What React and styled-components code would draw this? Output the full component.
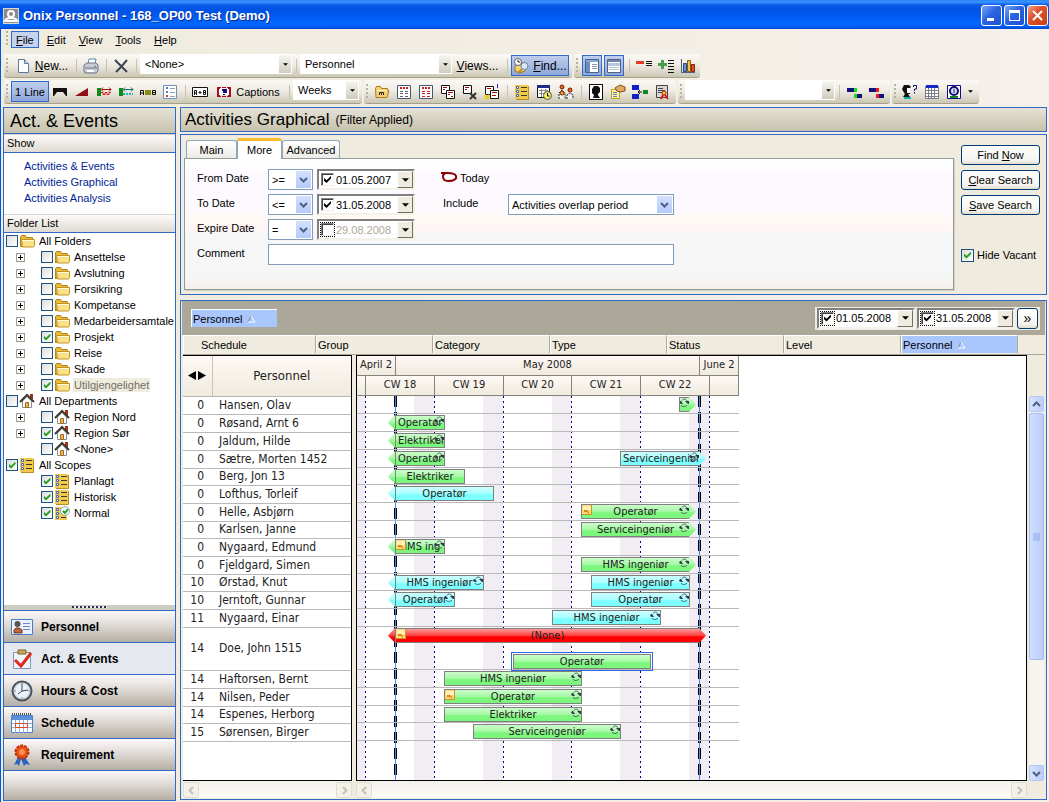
import React from "react";
import styled, { createGlobalStyle, css } from "styled-components";

const BLUE = "#316ac5";
const BEIGE = "#efebde";
const UI = '"Liberation Sans", Arial, sans-serif';
const CHART = '"DejaVu Sans Condensed", "DejaVu Sans", Tahoma, sans-serif';

const Global = createGlobalStyle`
  * { box-sizing: border-box; }
  body { margin: 0; font: 11px/14px ${UI}; color: #000; background: ${BEIGE}; }
  button, input, select { font: inherit; color: inherit; margin: 0; padding: 0; border-radius: 0; }
  button { border: 0; background: none; white-space: nowrap; }
  ul { list-style: none; margin: 0; padding: 0; }
  h1, h2 { margin: 0; font-weight: normal; }
  svg { display: block; flex: none; }
  u { text-underline-offset: 1px; }
`;

/* ---------- window frame ---------- */
const Window = styled.div`
  min-height: 100vh;
  display: flex;
  flex-direction: column;
  border-left: 1px solid #0054e3;
  background: linear-gradient(90deg, #efebde, #f5f0ea);
`;
const TitleBar = styled.header`
  height: 29px;
  margin-left: -1px;
  flex: none;
  display: flex;
  align-items: center;
  gap: 4px;
  padding: 3px 1px 1px 3px;
  color: #fff;
  text-shadow: 1px 1px #0a2a8a;
  background: linear-gradient(#2b87fa 0, #3a94ff 2px, #0a5be8 5px, #0052e4 10px, #0059f0 16px, #0066ff 22px, #0064fb 26px, #0043cf 29px);
`;
const Title = styled.h1`
  flex: 1;
  font-size: 13px;
  font-weight: bold;
`;
const WinButtons = styled.div`
  display: flex;
  gap: 2px;
`;
const WinButton = styled.button`
  width: 21px;
  height: 21px;
  border: 1px solid #fff;
  border-radius: 3px;
  display: grid;
  place-items: center;
  background: ${(p) =>
    p.$close
      ? "linear-gradient(135deg, #f0a088, #e0532c 40%, #c83c14)"
      : "linear-gradient(135deg, #7da7f5, #2b64e0 45%, #1c50d0)"};
`;

/* ---------- menus and toolbars ---------- */
const MenuBar = styled.nav`
  height: 25px;
  display: flex;
  align-items: flex-start;
  padding: 2px 0 0 5px;
`;
const MenuItem = styled.button`
  height: 17px;
  padding: 0 4px;
  margin-right: 3px;
  border: 1px solid ${(p) => (p.$active ? BLUE : "transparent")};
  background: ${(p) => (p.$active ? "#c6d3ef" : "none")};
`;
const ToolRow = styled.div`
  height: 26px;
  display: flex;
  align-items: flex-start;
  gap: 2px;
  padding-left: 3px;
`;
const Tools = styled.div`
  height: 24px;
  display: flex;
  align-items: center;
  padding: 0 ${(p) => p.$end || 3}px 0 2px;
  border-radius: 3px;
  background: linear-gradient(#fbf9f6, #f0ece4 45%, #cbc7b4);
  border-bottom: 1px solid #a5a287;
`;
const Grip = styled.span`
  width: 5px;
  height: 15px;
  flex: none;
  background: radial-gradient(circle at 1px 1px, #b5b29f 1px, transparent 1px) 0 0 / 5px 4px;
`;
const Sep = styled.span`
  width: 8px;
  height: 14px;
  flex: none;
  background: linear-gradient(#c5c2b5, #c5c2b5) center / 1px 100% no-repeat;
`;
const ToolButton = styled.button`
  width: ${(p) => p.$w || 22}px;
  height: 21px;
  flex: none;
  display: flex;
  align-items: center;
  justify-content: center;
  gap: 4px;
  margin: 0 ${(p) => (p.$spaced ? 1 : 0)}px;
  font-size: ${(p) => (p.$big ? 12 : 11)}px;
  border: 1px solid ${(p) => (p.$on ? BLUE : "transparent")};
  background: ${(p) => (p.$on ? "linear-gradient(#c0ceec, #8ea6da)" : "none")};
`;
const ComboBox = styled.span`
  display: grid;
  width: ${(p) => p.$w}px;
  height: 20px;
  align-self: flex-start;
  background: #fff;
  border: 1px solid #fff;
  & > * { grid-area: 1 / 1; }
  select {
    appearance: none;
    border: 0;
    background: transparent;
    padding: 0 16px 0 4px;
    outline: 0;
    min-width: 0;
  }
`;
const ComboArrow = styled.span`
  justify-self: end;
  pointer-events: none;
  width: 12px;
  display: grid;
  place-items: center;
  background: linear-gradient(#f8f6f2, #cfccbd);
`;
const Down = ({ w = 5 }) => (
  <svg width={w} height={(w + 1) / 2} viewBox="0 0 6 3" aria-hidden="true"><path d="M0 0h6L3 3z" fill="#000" /></svg>
);
const Combo = ({ w, value, label }) => (
  <ComboBox $w={w}>
    <select aria-label={label} defaultValue={value}><option>{value}</option></select>
    <ComboArrow><Down /></ComboArrow>
  </ComboBox>
);

/* ---------- icons ---------- */
const paint = {
  doc: <><path d="M3.500 1.500h6l4 4v9h-10z" fill="#fff" stroke="#5a7aa8" /><path d="M9.500 1.500v4h4" fill="#c8d8f0" stroke="#5a7aa8" /></>,
  printer: <><path d="M5 6l1-5h7l-1 5z" fill="#fff" stroke="#5b86b8" /><path d="M1 7l3-2h9l2 2v6l-2 2H2l-1-2z" fill="#c9ccd8" stroke="#6c7488" /><path d="M2 10h12" stroke="#6c7488" /><path d="M4 12h7v2H4z" fill="#fff" /><path d="M11 8h2v1h-2z" fill="#2fb52f" /></>,
  cross: <path d="M2 2L14 14M14 2L8 9L3 14" stroke="#3c4454" strokeWidth="2" fill="none" />,
  find: <><path d="M2 8l5-3h6l-1 8-6 2-4-2z" fill="#f6d36b" stroke="#9a7420" /><circle cx="5" cy="4" r="3.500" fill="#fff" stroke="#5a6474" /><path d="M5 2v2h2" stroke="#222" fill="none" /><circle cx="11.500" cy="8" r="3.500" fill="#d6e8fa" stroke="#6c86a8" /><path d="M9 11l-4 4" stroke="#c08a30" strokeWidth="2" /></>,
  paneLeft: <><path d="M1.500 1.500h13v13h-13z" fill="#fff" stroke="#44608e" /><path d="M2 2h12v2H2z" fill="#8aa6d6" /><path d="M2 4h4v10H2z" fill="#6d8cc4" /><path d="M8 6.500h5M8 8.500h5M8 10.500h5" stroke="#8d9aae" /></>,
  paneTop: <><path d="M1.500 1.500h13v13h-13z" fill="#fff" stroke="#53617a" /><path d="M2 2h12v2H2z" fill="#6f87b0" /><path d="M2 5h12v3H2z" fill="#b8c8e0" /><path d="M3 9.500h10M3 11.500h10" stroke="#b8bfca" /></>,
  minus: <><path d="M0 3h8v3H0z" fill="#e03c1c" /><path d="M10 3.500h6M10 5.500h6M10 7.500h6" stroke="#111" /></>,
  plus: <><path d="M3 2h3v3h3v3H6v3H3V8H0V5h3z" fill="#4c9c50" /><path d="M10 2.500h6M10 5.500h6M10 8.500h6M10 11.500h6M10 14.500h6" stroke="#111" /></>,
  chart: <><path d="M1.500 1v13.500H15" stroke="#50607c" fill="none" /><path d="M3.500 5.500h3v8h-3z" fill="#5b96dc" stroke="#234c88" /><path d="M7.500 2.500h3v11h-3z" fill="#f6c040" stroke="#8a5a10" /><path d="M11.500 6.500h3v7h-3z" fill="#e0502c" stroke="#802010" /></>,
  arch: <path d="M1 4h14v8h-1L11 8H5l-3 4H1z" fill="#111" />,
  ramp: <path d="M1 12L14 4v8z" fill="#8e0f16" />,
  redSpan: <><path d="M1 4h4v8H1z" fill="#10881c" /><path d="M5 8.500h2v2h2v-2h2v2h2v-2h2" stroke="#e01818" fill="none" /><path d="M6 5.500h9M7 3.500l-2 2 2 2M13 3.500l2 2-2 2" stroke="#a01010" fill="none" /></>,
  cyanSpan: <><path d="M1 4h4v8H1z" fill="#10881c" /><path d="M5 10h10" stroke="#20b8b8" strokeWidth="2" strokeDasharray="2 1" /><path d="M6 5.500h9M7 3.500l-2 2 2 2M13 3.500l2 2-2 2" stroke="#126c6c" fill="none" /></>,
  aBar: <><path d="M5 6h6v5H5z" fill="#8c8c10" /><path d="M.5 11V6.500h3V11M1 9h2M12.500 6.500v4h3v-4zM13 8.500h2" stroke="#111" fill="none" /></>,
  list: <><path d="M1.500 1.500h13v13h-13z" fill="#fff" stroke="#7090c0" /><path d="M4 3h2v2H4zM4 7h2v2H4z" fill="#4a80d0" /><path d="M4 11h2v2H4z" fill="#d04020" /><path d="M8 4.500h5M8 8.500h5M8 12.500h5" stroke="#90a0b8" /></>,
  aPlusB: <><path d="M.5 3.500h15v9H.5z" fill="#fff" stroke="#111" /><path d="M2.500 11V6.500h2V11M2.500 9h2M6.500 8.500h3M8 7v3M11.500 6.500v4h2v-4zM11.500 8.500h2" stroke="#111" fill="none" /></>,
  query: <><path d="M1 3.500h14M1 12.500h14" stroke="#a01020" strokeWidth="1" strokeDasharray="4 1" /><path d="M1 4h3v8H1zM12 4h3v8h-3z" fill="#a01020" /><path d="M3 5h10v6H3z" fill="#fff" /><path d="M6 6h4v2H8v1" stroke="#10107c" strokeWidth="2" fill="none" /><path d="M7 10h2v1H7z" fill="#10107c" /></>,
  folder: <><path d="M1.500 4.500l1-2h4l1 2h6v2h1.500l-2 7h-11z" fill="#f6d070" stroke="#a87c1c" /><path d="M3 6.500h10" stroke="#fff3c0" /><path d="M5.500 11V8.500h2V11M7.500 8.500h2V11" stroke="#222" fill="none" /></>,
  pageRed: <><path d="M1.500 1.500h13v13h-13z" fill="#fff" stroke="#405878" /><path d="M4 4h8" stroke="#d02020" strokeWidth="2" strokeDasharray="2 1" /><path d="M4 7.500h3M9 7.500h3M4 9.500h3M9 9.500h3M4 12.500h3M9 12.500h3" stroke="#666" /></>,
  pageRed2: <><path d="M1.500 1.500h13v13h-13z" fill="#fff" stroke="#405878" /><path d="M4 4h8" stroke="#d02020" strokeWidth="2" strokeDasharray="2 1" /><path d="M4 7.500h3M9 7.500h3M4 9.500h3M9 9.500h3M4 12.500h3M9 12.500h3" stroke="#d02020" /></>,
  copy: <><path d="M1.500 1.500h8v8h-8z" fill="#fff" stroke="#111" /><path d="M3 3.500h4M3 5.500h2" stroke="#a01010" /><path d="M6.500 6.500h8v8h-8z" fill="#fff" stroke="#111" /><path d="M8 8.500h5M8 10.500h2M11 12.500h2" stroke="#a01010" /></>,
  copyX: <><path d="M1.500 1.500h8v8h-8z" fill="#fff" stroke="#111" /><path d="M3 3.500h4M3 5.500h2" stroke="#a01010" /><path d="M8 9l6 6M14 9l-6 6" stroke="#333" strokeWidth="2" /></>,
  copyNew: <><path d="M1.500 2.500h8v8h-8z" fill="#fff" stroke="#111" /><path d="M6.500 6.500h8v8h-8z" fill="#fff" stroke="#111" /><path d="M3 4.500h4M8 8.500h5M8 11.500h4" stroke="#a01010" /><path d="M13.500 0v4" stroke="#2020c0" /><path d="M1 11l4 4M5 11l-4 4" stroke="#e8d010" strokeWidth="2" /></>,
  scope: <><path d="M1 1h13v14H1z" fill="#f2c94c" /><path d="M14.500 2v13.500H2" stroke="#b98d1e" fill="none" /><path d="M2.500 2.500h2v2h-2zM2.500 6.500h2v2h-2zM2.500 10.500h2v2h-2z" fill="#fff" stroke="#3c68b4" /><path d="M7 3.500h6M7 7.500h6M7 11.500h6" stroke="#3a3a28" /></>,
  calClock: <><path d="M1.500 1.500h12v12h-12z" fill="#fff" stroke="#111" /><path d="M1 1h13v3H1z" fill="#1c2c88" /><path d="M3 6.500h9M3 9.500h9M5.500 5v8M9.500 5v8" stroke="#888" /><circle cx="11.500" cy="11.500" r="4" fill="#f4f060" stroke="#555" /><path d="M11.500 9v3h2" stroke="#111" fill="none" /></>,
  people: <><circle cx="4" cy="3" r="2" fill="#f06820" stroke="#701c08" /><circle cx="12" cy="6" r="2" fill="#f06820" stroke="#701c08" /><path d="M1 15V9l3-3 3 3v6M9 15v-4l3-2 3 2v4" fill="#eee" stroke="#222" strokeDasharray="2 1" /><circle cx="4" cy="9" r="2" fill="#f0b020" stroke="#701c08" /></>,
  head: <><path d="M1 0h14v16H1z" fill="#111" /><path d="M2 1h12v14H2z" fill="#fff" /><path d="M4 5l2-3h4l2 2v4l-2 2v1l2 3H5l1-3-2-2z" fill="#111" /></>,
  hand: <><path d="M1.500 5.500h8v9h-8z" fill="#fff4a0" stroke="#b8a020" /><path d="M3 8.500h4M3 10.500h4M3 12.500h4" stroke="#6080c0" /><path d="M5 4l5-3 5 2v4l-5 1-3-1z" fill="#e0a860" stroke="#80501c" /></>,
  link: <><path d="M0 1h7v5H0zM0 10h7v5H0z" fill="#1020c8" /><path d="M11 6h5v4h-5z" fill="#10881c" /><path d="M10 8H6M8 6L6 8l2 2" stroke="#111" fill="none" /></>,
  cert: <><path d="M2.500 1.500h11v12h-11z" fill="#d8d8d8" stroke="#444" /><path d="M4 4.500h5M4 6.500h7M4 8.500h4" stroke="#444" /><circle cx="10" cy="9" r="2" fill="#f0e020" stroke="#c01818" /><path d="M9 11l-2 4M11 11l3 4" stroke="#e01818" strokeWidth="2" /></>,
  linkGreen: <><path d="M1 4h7v4H1zM10 10h6v4h-6z" fill="#10107c" /><path d="M8 4h3v4H8zM8 10h3v4H8z" fill="#18e018" /></>,
  linkRed: <><path d="M1 4h7v4H1zM10 10h6v4h-6z" fill="#10107c" /><path d="M8 4h3v4H8zM8 10h3v4H8z" fill="#f01818" /></>,
  askHead: <><path d="M0 5l2-4h5l2 2-1 1v6H6l2 3H1l2-3-2-3z" fill="#111" /><path d="M5 4h3v5H5z" fill="#fff" /><path d="M2 13h7v2H2z" fill="#18b0b0" /><path d="M11.500 3V1.500h3V5h-2v2M12.500 8v1.500" stroke="#10107c" strokeWidth="1" fill="none" /></>,
  calendar: <><path d="M1.500 2.500h13v12h-13z" fill="#fff" stroke="#7c7c88" /><path d="M2 1h12v3H2z" fill="#1828c8" /><path d="M2 6.500h12M2 9.500h12M2 12.500h12M4.500 4v10M7.500 4v10M10.500 4v10" stroke="#7c7c88" /></>,
  badge: <><path d="M1.500 1.500h13v13h-13z" fill="#fff" stroke="#10107c" /><circle cx="8" cy="7" r="4" fill="#dfe4f4" stroke="#10107c" strokeWidth="2" /><path d="M8 5v4" stroke="#10107c" /><path d="M4 13h8" stroke="#128020" strokeWidth="2" /></>,
  treeFolder: <><path d="M1.500 13.500v-10l1-1h4l1 2h6v9z" fill="#e9b93c" stroke="#b48618" /><path d="M2.500 6.500h13v6l-1 1.500H3.500z" fill="#fbe08a" stroke="#c0931f" /><path d="M3 7.500h12" stroke="#fffbe0" /></>,
  house: <><path d="M11 1h3v5h-3z" fill="#a03020" /><path d="M3.500 8v6.500h9V8L8 3.500z" fill="#fff" stroke="#8c8c94" /><path d="M1 9l7-7 7 7" fill="none" stroke="#40382c" strokeWidth="2" /><path d="M6.500 9.500h3v5h-3z" fill="#f0b850" stroke="#a06820" /></>,
  normal: <><path d="M1 2h12v13H1z" fill="#f2c94c" /><path d="M2.500 3.500h2v2h-2zM2.500 7.500h2v2h-2zM2.500 11.500h2v2h-2z" fill="#fff" stroke="#3c68b4" /><path d="M7 12.500h5" stroke="#3a3a28" /><circle cx="11" cy="6" r="4.500" fill="#f4f8f4" stroke="#9aa" /><path d="M9 6l2 2 3-4" stroke="#18a030" strokeWidth="2" fill="none" /></>,
};
const Icon = ({ name, size = 16 }) => (
  <svg width={size} height={size} viewBox="0 0 16 16" aria-hidden="true">{paint[name]}</svg>
);
const navPaint = {
  Personnel: <><path d="M.5 3.500h21v15H.5z" fill="#e9f2fc" stroke="#4a7cc0" /><path d="M12 7.500h7M12 10.500h7M12 13.500h7" stroke="#6a8cc0" /><circle cx="6.500" cy="8" r="3" fill="#555" /><path d="M3 17v-3l2-2h3l3 2v3z" fill="#c0663a" stroke="#6c3418" /></>,
  "Act. & Events": <><path d="M2.500 4.500h17v16h-17z" fill="#f0f5fc" stroke="#7c96bc" /><path d="M7 2h8v4H7z" fill="#c9a85a" stroke="#7c6424" /><path d="M4 12l6 6L20 5" stroke="#e0281c" strokeWidth="3" fill="none" /></>,
  "Hours & Cost": <><circle cx="11" cy="11" r="9.500" fill="#c8dcf4" stroke="#4c545e" strokeWidth="2" /><circle cx="11" cy="11" r="7" fill="#eaf2fb" /><path d="M11 4v7l6-1M11 11l-4 3" stroke="#444" fill="none" /><path d="M11 3v2M11 17v2M3 11h2M17 11h2" stroke="#c08a28" /></>,
  Schedule: <><path d="M.5 3.500h21v17H.5z" fill="#fff" stroke="#4a80c8" /><path d="M1 4h20v4H1z" fill="#5b90dc" /><path d="M1 2h20" stroke="#555" strokeWidth="2" strokeDasharray="1 1" /><path d="M1 11.500h20M1 15.500h20M4.500 8v13M8.500 8v13M12.500 8v13M16.500 8v13" stroke="#8ab0e4" /><path d="M4.500 11.500h12v4h-12z" fill="none" stroke="#e04820" /></>,
  Requirement: <><path d="M7 13l-4 8 3-1 2 2 2-7 3 7 2-2 4 1-5-8z" fill="#2c64c0" /><circle cx="11" cy="8" r="6.500" fill="#e8501c" stroke="#c03008" strokeWidth="2" strokeDasharray="3 1" /><circle cx="11" cy="8" r="3" fill="#f89048" /></>,
};
const Recycle = () => (
  <svg width="10" height="10" viewBox="0 0 10 10" aria-hidden="true">
    <path d="M3 2.500C4 .5 7 .5 8 3M2 7c1 2 4 2 6 0" fill="none" stroke="#55586c" />
    <path d="M6 3h4v3H9zM0 5l1-2h1l2 3H2z" fill="#34364c" />
  </svg>
);
const Note = () => (
  <svg width="10" height="10" viewBox="0 0 10 10" aria-hidden="true">
    <path d="M0 0h10v10H0z" fill="#fbd871" /><path d="M1 1h8v4H1z" fill="#fff0b8" />
    <path d="M2 5h3l2 2v2L5 7H2z" fill="#d88818" /><path d="M9.500 0v9.500H0" stroke="#c8962c" fill="none" />
  </svg>
);
const Chevron = ({ dir = "down", color = "#4d6185" }) => (
  <svg width="9" height="9" viewBox="0 0 9 9" aria-hidden="true"
    style={{ transform: `rotate(${{ down: 0, left: 90, up: 180, right: 270 }[dir]}deg)` }}>
    <path d="M1 3l3.500 3.500L8 3" fill="none" stroke={color} strokeWidth="2" />
  </svg>
);
const SortMark = () => (
  <svg width="9" height="8" viewBox="0 0 9 8" aria-hidden="true">
    <path d="M4 1L1 7" stroke="#8c8c8c" /><path d="M4 1l4 6H1" stroke="#fff" fill="none" />
  </svg>
);

/* ---------- form parts ---------- */
const Check = styled.input.attrs({ type: "checkbox" })`
  appearance: none;
  flex: none;
  width: ${(p) => (p.$small ? 12 : 13)}px;
  height: ${(p) => (p.$small ? 12 : 13)}px;
  display: grid;
  place-items: center;
  border: 1px solid #1c5180;
  background: linear-gradient(135deg, #dcdcd7, #fff);
  ${(p) => p.$classic && css`
    border: 1px solid #808080;
    border-right-color: #f0ede2;
    border-bottom-color: #f0ede2;
    box-shadow: inset 1px 1px #404040;
    background: #fff;
  `}
  ${(p) => p.$focus && css`outline: 1px dotted #000;`}
  &:checked::before {
    content: "";
    width: 7px;
    height: 7px;
    background: ${(p) => (p.$classic ? "#000" : "#21a121")};
    clip-path: polygon(0 30%, 36% 62%, 100% 0, 100% 36%, 36% 100%, 0 68%);
  }
`;
const SelectBox = styled.span`
  display: grid;
  width: ${(p) => p.$w}px;
  height: 21px;
  border: 1px solid #7f9db9;
  background: #fff;
  & > * { grid-area: 1 / 1; }
  select { appearance: none; border: 0; background: transparent; padding: 0 18px 0 3px; min-width: 0; }
`;
const SelectArrow = styled.span`
  justify-self: end;
  pointer-events: none;
  width: 15px;
  margin: 1px;
  display: grid;
  place-items: center;
  background: linear-gradient(#d4e0fd, #b5cafa);
`;
const Select = ({ id, w, value, label }) => (
  <SelectBox $w={w}>
    <select id={id} aria-label={label} defaultValue={value}><option>{value}</option></select>
    <SelectArrow><Chevron /></SelectArrow>
  </SelectBox>
);
const DateBox = styled.span`
  display: flex;
  align-items: center;
  width: 98px;
  height: 21px;
  padding-left: 2px;
  background: #fff;
  border: 2px solid;
  border-color: #808080 #f4f1e8 #f4f1e8 #808080;
  input[type="text"] {
    flex: 1;
    min-width: 0;
    border: 0;
    padding-left: 2px;
    background: none;
    color: ${(p) => (p.$off ? "#aca899" : "#000")};
  }
`;
const DateArrow = styled.button`
  width: 16px;
  align-self: stretch;
  display: grid;
  place-items: center;
  background: ${BEIGE};
  border: 1px solid;
  border-color: #fff #716f64 #716f64 #fff;
`;
const DateField = ({ value, label, on = true, focus }) => (
  <DateBox $off={!on}>
    <Check $classic $focus={focus} defaultChecked={on} aria-label={`Use ${label}`} />
    <input type="text" defaultValue={value} aria-label={label} />
    <DateArrow aria-label={`Pick ${label}`}><Down w={7} /></DateArrow>
  </DateBox>
);

/* ---------- sidebar ---------- */
const Body = styled.div`
  flex: 1;
  display: flex;
  gap: 4px;
  padding: 1px 2px 1px;
  min-height: 0;
`;
const Sidebar = styled.aside`
  width: 173px;
  flex: none;
  display: flex;
  flex-direction: column;
  border: 1px solid ${BLUE};
  border-top: 0;
  background: #fff;
`;
const PanelTitle = styled.h2`
  height: ${(p) => p.$h}px;
  flex: none;
  display: flex;
  align-items: center;
  gap: 6px;
  margin: ${(p) => (p.$side ? "0 -1px" : "0")};
  padding-left: ${(p) => (p.$side ? 6 : 4)}px;
  font-size: ${(p) => (p.$side ? 18 : 17)}px;
  border: 1px solid ${BLUE};
  background: linear-gradient(#e6e2d6, #c6c2ac);
  small { font-size: 12px; }
`;
const Section = styled.div`
  height: 19px;
  flex: none;
  padding: 1px 0 0 3px;
  background: linear-gradient(#fdfaf9, #dfdad2);
  border-top: 1px solid #d8d4cc;
  border-bottom: 1px solid ${BLUE};
`;
const ShowLinks = styled.nav`
  height: 61px;
  flex: none;
  display: flex;
  flex-direction: column;
  padding: 5px 0 0 20px;
  a { height: 16px; line-height: 16px; color: #001e96; text-decoration: none; }
`;
const Tree = styled.ul`
  flex: 1;
`;
const TreeRow = styled.li`
  display: flex;
  align-items: center;
  height: 16px;
  padding-left: ${(p) => (p.$deep ? 12 : 2)}px;
  label { display: flex; align-items: center; height: 16px; gap: 1px; }
`;
const TreeText = styled.span`
  margin-left: 2px;
  padding: 0 1px;
  ${(p) => p.$dim && css`background: ${BEIGE}; color: #716f64;`}
`;
const Expander = styled.button`
  width: 9px;
  height: 9px;
  margin-right: 16px;
  border: 1px solid #9c9a8a;
  background: linear-gradient(#000, #000) center / 5px 1px no-repeat, linear-gradient(#000, #000) center / 1px 5px no-repeat, #fff;
  visibility: ${(p) => (p.$none ? "hidden" : "visible")};
`;
const Splitter = styled.div`
  height: 5px;
  flex: none;
  background: repeating-linear-gradient(90deg, #2c2c54 0 2px, #eee 2px 4px) center 1px / 35px 2px no-repeat, #cfccc0;
`;
const NavButton = styled.button`
  height: 32px;
  flex: none;
  display: flex;
  align-items: center;
  gap: 8px;
  padding-left: 7px;
  font-weight: bold;
  font-size: 12px;
  border-top: 1px solid ${BLUE};
  background: ${(p) => (p.$active ? "#e6e8f0" : "linear-gradient(#fdf9f9, #dcd7d2 50%, #b4ada5)")};
`;
const NavFoot = styled.div`
  height: 30px;
  flex: none;
  border-top: 1px solid ${BLUE};
  background: linear-gradient(#fdf9f9, #dcd7d2 50%, #b4ada5);
`;

/* ---------- filter panel ---------- */
const Main = styled.main`
  flex: 1;
  min-width: 0;
  display: flex;
  flex-direction: column;
  padding-bottom: 1px;
`;
const FilterPanel = styled.section`
  flex: none;
  display: flex;
  margin: 2px 0 5px;
  padding: 2px 6px 4px 3px;
  border: 1px solid ${BLUE};
  background: ${BEIGE};
  gap: 7px;
`;
const FilterLeft = styled.div`
  flex: 1;
  min-width: 0;
`;
const Tabs = styled.div`
  display: flex;
  align-items: flex-end;
  height: 21px;
  padding-left: 2px;
`;
const Tab = styled.button`
  width: ${(p) => p.$w}px;
  height: ${(p) => (p.$active ? 21 : 18)}px;
  border: 1px solid #91a7b4;
  border-bottom: 0;
  border-radius: 3px 3px 0 0;
  background: ${(p) => (p.$active ? "#fff" : "linear-gradient(#fff, #ecebe6)")};
  ${(p) => p.$active && css`
    border-top: 3px solid #fdb92c;
    margin-bottom: -1px;
    z-index: 1;
  `}
`;
const Pane = styled.div`
  height: 132px;
  display: flex;
  padding: 10px 0 0 12px;
  border: 1px solid #919b9c;
  box-shadow: 1px 1px #d4d0c0;
  background: linear-gradient(#fff, #fdfaff 12%, #fdfaff 42%, #fffaf5 43%, #fff4f4 56%, #f6f6f6 57%, #f6f6f6 90%, #f4f1ea);
`;
const Fields = styled.div`
  display: grid;
  grid-template-columns: 71px 45px 4px 98px 28px 65px 166px;
  grid-auto-rows: 21px;
  row-gap: 4px;
`;
const Cell = styled.div`
  grid-column: ${(p) => p.$c};
  grid-row: ${(p) => p.$r};
  display: flex;
  line-height: 18px;
  gap: 2px;
`;
const TodayMark = styled.span`
  display: flex;
  gap: 2px;
  margin-left: -2px;
`;
const CommentInput = styled.input`
  flex: 1;
  height: 21px;
  border: 1px solid #7f9db9;
  background: #fff;
`;
const FilterActions = styled.div`
  width: 79px;
  padding-top: 8px;
  display: flex;
  flex-direction: column;
  gap: 5px;
  label { display: flex; align-items: center; gap: 3px; margin-top: 28px; white-space: nowrap; }
`;
const XpButton = styled.button`
  height: ${(p) => (p.$square ? 21 : 20)}px;
  width: ${(p) => (p.$square ? "21px" : "auto")};
  font-size: ${(p) => (p.$square ? 14 : 11)}px;
  line-height: 14px;
  border: 1px solid #003c74;
  border-radius: 3px;
  background: linear-gradient(#fff, #f4f3ee 80%, #dfdbd0);
`;

/* ---------- schedule ---------- */
const Board = styled.section`
  flex: 1;
  display: flex;
  flex-direction: column;
  padding: 0 1px 1px 2px;
  border: 1px solid ${BLUE};
  background: ${BEIGE};
`;
const GroupBar = styled.div`
  height: 34px;
  flex: none;
  display: flex;
  align-items: center;
  justify-content: space-between;
  margin: 0 0 0 -1px;
  padding: 0 5px 0 9px;
  background: #aca899;
`;
const Chip = styled.button`
  width: 86px;
  height: 18px;
  display: flex;
  align-items: center;
  gap: 4px;
  padding-left: 1px;
  border: 1px solid #fff;
  border-right: 0;
  border-bottom: 0;
  background: #a9c6fd;
`;
const Range = styled.div`
  display: flex;
  gap: 2px;
  padding: 1px 2px;
  background: ${BEIGE};
`;
const Columns = styled.div`
  height: 20px;
  flex: none;
  display: flex;
  border-bottom: 1px solid #aca899;
`;
const Column = styled.button`
  width: ${(p) => p.$w || 117}px;
  height: 18px;
  display: flex;
  align-items: center;
  gap: 4px;
  padding-left: ${(p) => (p.$indent ? 17 : 1)}px;
  border-top: 1px solid #fff;
  border-left: 1px solid #fff;
  border-right: 1px solid #aca899;
  background: ${(p) => (p.$sorted ? "#a9c6fd" : BEIGE)};
`;
const Panes = styled.div`
  flex: 1;
  display: flex;
  color: #222;
  font-family: ${CHART};
`;
const PaneColumn = styled.div`
  display: flex;
  flex-direction: column;
  flex: ${(p) => (p.$w ? "none" : 1)};
  width: ${(p) => (p.$w ? p.$w + "px" : "auto")};
  margin-right: ${(p) => (p.$w ? 4 : 0)}px;
`;
const Sheet = styled.div`
  flex: 1;
  background: #fff;
  border: 1px solid #000;
  border-left-width: ${(p) => (p.$open ? 0 : 1)}px;
`;
const Names = styled.table`
  width: 100%;
  table-layout: fixed;
  border-collapse: collapse;
  font-size: 12px;
  th {
    height: 40px;
    padding: 0;
    font-size: 13px;
    font-weight: normal;
    border-bottom: 1px solid #b8b4ac;
    background: linear-gradient(#fff8f5, ${BEIGE});
  }
  th:first-child { border-right: 1px solid #c8c4b8; }
  th svg { margin: 0 auto; }
  td { padding: 0; line-height: 15px; border-bottom: 1px solid #b9b9b9; white-space: nowrap; }
  td:first-child { text-align: right; padding-right: 8px; }
  td:last-child { padding-left: 7px; }
`;
const Timeline = styled.div`
  position: relative;
  width: 382px;
  height: 100%;
  display: flex;
  flex-direction: column;
`;
const Scale = styled.div`
  display: grid;
  grid-template-columns: ${(p) => p.$cols};
  height: 20px;
  font-size: 11px;
  line-height: 18px;
  text-align: center;
  white-space: nowrap;
  background: linear-gradient(#fff8f5, ${BEIGE});
  border-bottom: 1px solid #85837c;
  span { border-right: 1px solid #85837c; overflow: hidden; }
`;
const Canvas = styled.div`
  position: relative;
  flex: 1;
`;
const Backdrop = styled.svg`
  position: absolute;
  inset: 0;
`;
const Lane = styled.div`
  position: relative;
  height: ${(p) => p.$h}px;
  border-bottom: 1px solid #b9b9b9;
`;
const tones = {
  green: ["#cdfdcd", "#a4f8a4", "#7df67d"],
  cyan: ["#cdffff", "#a8ffff", "#7dffff"],
  red: ["#ff9a9a", "#ff4040", "#fe0000"],
};
const tone = (t) => `linear-gradient(${tones[t][0]}, ${tones[t][1]} 50%, ${tones[t][2]} 60%)`;
const Bar = styled.div`
  position: absolute;
  top: ${(p) => (p.$low ? 27 : 1)}px;
  height: 15px;
  display: flex;
  ${(p) => p.$picked && css`outline: 1px solid #316ae0; outline-offset: 1px;`}
`;
const Arrow = styled.span`
  width: 7px;
  background: ${(p) => tone(p.$tone)};
  clip-path: ${(p) => (p.$left ? "polygon(0 50%, 100% 0, 100% 100%)" : "polygon(0 0, 100% 50%, 0 100%)")};
`;
const BarBody = styled.span`
  position: relative;
  flex: 1;
  min-width: 0;
  padding: 0 2px;
  font-size: 11px;
  line-height: 14px;
  text-align: center;
  white-space: nowrap;
  overflow: hidden;
  border: 1px solid #808080;
  border-right-width: ${(p) => (p.$openRight ? 0 : 1)}px;
  background: ${(p) => tone(p.$tone)};
`;
const Badge = styled.span`
  position: absolute;
  top: 0;
  ${(p) => (p.$left ? "left: 0;" : "right: 0;")}
`;

/* ---------- scrollbars ---------- */
const HScroll = styled.div`
  height: 17px;
  flex: none;
  display: flex;
  justify-content: space-between;
  padding: 1px 0 0;
  background: linear-gradient(#f3f1ec, #fefcf9);
`;
const ScrollButton = styled.button`
  width: ${(p) => (p.$live ? 15 : 16)}px;
  height: 16px;
  display: grid;
  place-items: center;
  border: 1px solid ${(p) => (p.$live ? "#b4c8f6" : "#e0ddd0")};
  border-radius: 2px;
  background: ${(p) => (p.$live ? "linear-gradient(90deg, #d6e2fe, #b9cdfb)" : "#f3f1ea")};
`;
const VScroll = styled.div`
  width: 18px;
  flex: none;
  display: flex;
  flex-direction: column;
  padding: 41px 1px 17px 2px;
`;
const VTrack = styled.div`
  flex: 1;
  background: #f6f4ef;
`;
const VThumb = styled.div`
  width: 15px;
  height: 70%;
  margin-top: 1px;
  display: grid;
  place-items: center;
  border: 1px solid #a6bdf2;
  border-radius: 2px;
  background: linear-gradient(90deg, #d0defe, #b9cdfb);
`;

/* ---------- data ---------- */
const tree = [
  ["All Folders", 0, "treeFolder", false],
  ["Ansettelse", 1, "treeFolder", false, true],
  ["Avslutning", 1, "treeFolder", false, true],
  ["Forsikring", 1, "treeFolder", false, true],
  ["Kompetanse", 1, "treeFolder", false, true],
  ["Medarbeidersamtale", 1, "treeFolder", false, true],
  ["Prosjekt", 1, "treeFolder", true, true],
  ["Reise", 1, "treeFolder", false, true],
  ["Skade", 1, "treeFolder", false, true],
  ["Utilgjengelighet", 1, "treeFolder", true, true],
  ["All Departments", 0, "house", false],
  ["Region Nord", 1, "house", false, true],
  ["Region Sør", 1, "house", true, true],
  ["<None>", 1, "house", false],
  ["All Scopes", 0, "scope", true],
  ["Planlagt", 1, "scope", true],
  ["Historisk", 1, "scope", true],
  ["Normal", 1, "normal", true],
];

/* bar: label, colour, from, to, flags (l/r arrows, n note, c recurring, p picked) */
const staff = [
  [0, "Hansen, Olav", 18, ["", "green", 322, 339, "rc"]],
  [0, "Røsand, Arnt 6", 18, ["Operatør", "green", 31, 88, "lc"]],
  [0, "Jaldum, Hilde", 18, ["Elektriker", "green", 31, 88, "lc"]],
  [0, "Sætre, Morten 1452", 18, ["Operatør", "green", 31, 88, "lc"], ["Serviceingeniør", "cyan", 263, 349, "rc"]],
  [0, "Berg, Jon 13", 17, ["Elektriker", "green", 31, 108, "l"]],
  [0, "Lofthus, Torleif", 18, ["Operatør", "cyan", 31, 137, "l"]],
  [0, "Helle, Asbjørn", 18, ["Operatør", "green", 224, 339, "rnc"]],
  [0, "Karlsen, Janne", 17, ["Serviceingeniør", "green", 224, 339, "rc"]],
  [0, "Nygaard, Edmund", 18, ["HMS ing", "green", 31, 88, "lnc"]],
  [0, "Fjeldgard, Simen", 18, ["HMS ingeniør", "green", 224, 339, "rc"]],
  [10, "Ørstad, Knut", 17, ["HMS ingeniør", "cyan", 31, 127, "lc"], ["HMS ingeniør", "cyan", 234, 333, "c"]],
  [10, "Jerntoft, Gunnar", 18, ["Operatør", "cyan", 31, 98, "lc"], ["Operatør", "cyan", 234, 333, "c"]],
  [11, "Nygaard, Einar", 18, ["HMS ingeniør", "cyan", 195, 304, "c"]],
  [14, "Doe, John 1515", 43, ["(None)", "red", 31, 349, "lrn"], ["Operatør", "green", 156, 294, "p"]],
  [14, "Haftorsen, Bernt", 18, ["HMS ingeniør", "green", 87, 225, "c"]],
  [14, "Nilsen, Peder", 18, ["Operatør", "green", 87, 225, "nc"]],
  [14, "Espenes, Herborg", 17, ["Elektriker", "green", 87, 225, "c"]],
  [15, "Sørensen, Birger", 18, ["Serviceingeniør", "green", 116, 264, "c"]],
];
const weeks = [8, 77, 146, 214, 283, 352];
const weekends = [[0, 8], [57, 20], [126, 20], [195, 19], [263, 20], [332, 20]];

const ActivityBar = ({ bar: [text, color, from, to, flags] }) => {
  const has = (f) => flags.includes(f);
  return (
    <Bar $low={has("p")} $picked={has("p")} style={{ left: from, width: to - from }}>
      {has("l") && <Arrow $left $tone={color} />}
      <BarBody $tone={color} $openRight={has("r")}>
        {text}
        {has("n") && <Badge $left><Note /></Badge>}
        {has("c") && <Badge><Recycle /></Badge>}
      </BarBody>
      {has("r") && <Arrow $tone={color} />}
    </Bar>
  );
};

const IconTool = ({ name, label, on }) => (
  <ToolButton aria-label={label} $on={on} $spaced={on} $w={on ? 20 : 22}><Icon name={name} /></ToolButton>
);

export default function App() {
  return (
    <Window>
      <Global />
      <TitleBar>
        <svg width="16" height="16" viewBox="0 0 16 16" aria-hidden="true">
          <path d="M0 0h16v16H0z" fill="#d8d8d8" /><path d="M1 1h14v14H1z" fill="#8c8c8c" />
          <circle cx="8" cy="6" r="3" fill="none" stroke="#fff" strokeWidth="2" />
          <path d="M2 13c1-4 11-4 12 0z" fill="none" stroke="#fff" strokeWidth="2" />
        </svg>
        <Title>Onix Personnel - 168_OP00 Test (Demo)</Title>
        <WinButtons>
          <WinButton aria-label="Minimize"><svg width="13" height="13"><path d="M2 9h7v3H2z" fill="#fff" /></svg></WinButton>
          <WinButton aria-label="Maximize"><svg width="13" height="13"><path d="M1 1h11v11H1zM2 4v7h9V4z" fill="#fff" fillRule="evenodd" /></svg></WinButton>
          <WinButton $close aria-label="Close"><svg width="13" height="13"><path d="M2 2l9 9M11 2l-9 9" stroke="#fff" strokeWidth="2" /></svg></WinButton>
        </WinButtons>
      </TitleBar>

      <MenuBar>
        <Grip />
        <MenuItem $active><u>F</u>ile</MenuItem>
        <MenuItem><u>E</u>dit</MenuItem>
        <MenuItem><u>V</u>iew</MenuItem>
        <MenuItem><u>T</u>ools</MenuItem>
        <MenuItem><u>H</u>elp</MenuItem>
      </MenuBar>

      <ToolRow>
        <Tools>
          <Grip />
          <ToolButton $w={61} $big><Icon name="doc" /><span><u>N</u>ew...</span></ToolButton>
          <Sep />
          <IconTool name="printer" label="Print" />
          <Sep />
          <IconTool name="cross" label="Delete" />
          <Sep />
          <Combo w={152} value="<None>" label="Category" />
          <Sep />
          <Combo w={152} value="Personnel" label="Module" />
          <ToolButton $w={51} $big><span><u>V</u>iews...</span></ToolButton>
          <Sep />
          <ToolButton $w={58} $big $on><Icon name="find" /><span><u>F</u>ind...</span></ToolButton>
        </Tools>
        <Tools $end={1}>
          <Grip />
          <IconTool name="paneLeft" label="Navigation pane" on />
          <IconTool name="paneTop" label="Filter pane" on />
          <Sep />
          <IconTool name="minus" label="Collapse" />
          <IconTool name="plus" label="Expand" />
          <IconTool name="chart" label="Chart" />
        </Tools>
      </ToolRow>

      <ToolRow>
        <Tools>
          <Grip />
          <ToolButton $w={38} $on>1 Line</ToolButton>
          <IconTool name="arch" label="Summary" />
          <IconTool name="ramp" label="Progress" />
          <IconTool name="redSpan" label="Red span" />
          <IconTool name="cyanSpan" label="Cyan span" />
          <IconTool name="aBar" label="Text beside bar" />
          <IconTool name="list" label="List" />
          <Sep />
          <IconTool name="aPlusB" label="Combine" />
          <ToolButton $w={74}><Icon name="query" /><span>Captions</span></ToolButton>
          <Sep />
          <Combo w={66} value="Weeks" label="Time scale" />
        </Tools>
        <Tools $end={3}>
          <Grip />
          {["folder", "pageRed", "pageRed2", "copy", "copyX", "copyNew"].map((n) => <IconTool key={n} name={n} label={n} />)}
          <Sep />
          {["scope", "calClock", "people"].map((n) => <IconTool key={n} name={n} label={n} />)}
          <Sep />
          {["head", "hand", "link", "cert"].map((n) => <IconTool key={n} name={n} label={n} />)}
        </Tools>
        <Tools>
          <Grip />
          <Combo w={150} value="" label="Search" />
          <Sep />
          <IconTool name="linkGreen" label="Link" />
          <IconTool name="linkRed" label="Unlink" />
        </Tools>
        <Tools>
          <Grip />
          {["askHead", "calendar", "badge"].map((n) => <IconTool key={n} name={n} label={n} />)}
          <ToolButton $w={11} aria-label="More"><Down /></ToolButton>
        </Tools>
      </ToolRow>

      <Body>
        <Sidebar>
          <PanelTitle $h={27} $side>Act. &amp; Events</PanelTitle>
          <Section>Show</Section>
          <ShowLinks>
            <a href="#events">Activities &amp; Events</a>
            <a href="#graphical">Activities Graphical</a>
            <a href="#analysis">Activities Analysis</a>
          </ShowLinks>
          <Section>Folder List</Section>
          <Tree>
            {tree.map(([name, deep, icon, on, more]) => (
              <TreeRow key={name} $deep={deep}>
                {deep ? <Expander $none={!more} aria-label={`Expand ${name}`} /> : null}
                <label>
                  <Check $small defaultChecked={on} />
                  <Icon name={icon} />
                  <TreeText $dim={name === "Utilgjengelighet"}>{name}</TreeText>
                </label>
              </TreeRow>
            ))}
          </Tree>
          <Splitter />
          {Object.keys(navPaint).map((name) => (
            <NavButton key={name} $active={name === "Act. & Events"}>
              <svg width="22" height="22" viewBox="0 0 22 22" aria-hidden="true">{navPaint[name]}</svg>
              {name}
            </NavButton>
          ))}
          <NavFoot />
        </Sidebar>

        <Main>
          <PanelTitle $h={25}>Activities Graphical <small>(Filter Applied)</small></PanelTitle>

          <FilterPanel>
            <FilterLeft>
              <Tabs>
                <Tab $w={51}>Main</Tab>
                <Tab $w={45} $active>More</Tab>
                <Tab $w={58}>Advanced</Tab>
              </Tabs>
              <Pane>
                <Fields>
                  <Cell $c={1} $r={1}><label htmlFor="from">From Date</label></Cell>
                  <Cell $c={2} $r={1}><Select id="from" w={45} value=">=" /></Cell>
                  <Cell $c={4} $r={1}><DateField label="from date" value="01.05.2007" /></Cell>
                  <Cell $c="6 / 8" $r={1}>
                    <TodayMark>
                      <svg width="17" height="16" viewBox="0 0 17 16" aria-hidden="true">
                        <path d="M0 4h6M6 4c-6 0-5 8 1 8s9-2 8-5-6-3-9-3" fill="none" stroke="#8b0000" strokeWidth="2" />
                      </svg>
                      Today
                    </TodayMark>
                  </Cell>
                  <Cell $c={1} $r={2}><label htmlFor="to">To Date</label></Cell>
                  <Cell $c={2} $r={2}><Select id="to" w={45} value="<=" /></Cell>
                  <Cell $c={4} $r={2}><DateField label="to date" value="31.05.2008" /></Cell>
                  <Cell $c={6} $r={2}><label htmlFor="include">Include</label></Cell>
                  <Cell $c={7} $r={2}><Select id="include" w={166} value="Activities overlap period" /></Cell>
                  <Cell $c={1} $r={3}><label htmlFor="expire">Expire Date</label></Cell>
                  <Cell $c={2} $r={3}><Select id="expire" w={45} value="=" /></Cell>
                  <Cell $c={4} $r={3}><DateField label="expire date" value="29.08.2008" on={false} focus /></Cell>
                  <Cell $c={1} $r={4}><label htmlFor="comment">Comment</label></Cell>
                  <Cell $c="2 / 8" $r={4}><CommentInput id="comment" type="text" /></Cell>
                </Fields>
              </Pane>
            </FilterLeft>
            <FilterActions>
              <XpButton>Find <u>N</u>ow</XpButton>
              <XpButton><u>C</u>lear Search</XpButton>
              <XpButton><u>S</u>ave Search</XpButton>
              <label><Check defaultChecked />Hide Vacant</label>
            </FilterActions>
          </FilterPanel>

          <Board>
            <GroupBar>
              <Chip>Personnel <SortMark /></Chip>
              <Range>
                <DateField label="range start" value="01.05.2008" focus />
                <DateField label="range end" value="31.05.2008" focus />
                <XpButton $square aria-label="More">»</XpButton>
              </Range>
            </GroupBar>
            <Columns>
              <Column $w={133} $indent>Schedule</Column>
              {["Group", "Category", "Type", "Status", "Level"].map((c) => <Column key={c}>{c}</Column>)}
              <Column $sorted>Personnel <SortMark /></Column>
            </Columns>
            <Panes>
              <PaneColumn $w={169}>
                <Sheet $open>
                  <Names>
                    <colgroup><col width="29" /><col /></colgroup>
                    <thead>
                      <tr>
                        <th aria-label="Order">
                          <svg width="18" height="9" viewBox="0 0 18 9"><path d="M8 0v9L0 4.500zM10 0v9l8-4.500z" fill="#000" /></svg>
                        </th>
                        <th>Personnel</th>
                      </tr>
                    </thead>
                    <tbody>
                      {staff.map(([n, name, h]) => (
                        <tr key={name} style={{ height: h }}><td>{n}</td><td>{name}</td></tr>
                      ))}
                    </tbody>
                  </Names>
                </Sheet>
                <HScroll>
                  <ScrollButton aria-label="Scroll left"><Chevron dir="left" color="#c4c1b4" /></ScrollButton>
                  <ScrollButton aria-label="Scroll right"><Chevron dir="right" color="#c4c1b4" /></ScrollButton>
                </HScroll>
              </PaneColumn>
              <PaneColumn>
                <Sheet>
                  <Timeline>
                    <Scale $cols="39px 304px 39px"><span>April 2</span><span>May 2008</span><span>June 2</span></Scale>
                    <Scale $cols="9px 69px 69px 68px 69px 69px 29px">
                      <span /><span>CW 18</span><span>CW 19</span><span>CW 20</span><span>CW 21</span><span>CW 22</span><span />
                    </Scale>
                    <Canvas>
                      <Backdrop width="100%" height="100%" aria-hidden="true">
                        {weekends.map(([x, w]) => <rect key={x} x={x} width={w} height="100%" fill="#f1edf2" />)}
                        {weeks.map((x) => (
                          <line key={x} x1={x + 0.5} x2={x + 0.5} y1="0" y2="100%" stroke="#000080" strokeDasharray="2 3" />
                        ))}
                        {[38, 342].map((x) => (
                          <g key={x}>
                            <line x1={x + 0.5} x2={x + 0.5} y1="0" y2="100%" stroke="#000" strokeWidth="3" strokeDasharray="11 5" />
                            <line x1={x + 0.5} x2={x + 0.5} y1="0" y2="100%" stroke="#4a84f0" />
                          </g>
                        ))}
                      </Backdrop>
                      {staff.map(([, name, h, ...bars]) => (
                        <Lane key={name} $h={h}>
                          {bars.map((b) => <ActivityBar key={b[2]} bar={b} />)}
                        </Lane>
                      ))}
                    </Canvas>
                  </Timeline>
                </Sheet>
                <HScroll>
                  <ScrollButton aria-label="Scroll left"><Chevron dir="left" color="#c4c1b4" /></ScrollButton>
                  <ScrollButton aria-label="Scroll right"><Chevron dir="right" color="#c4c1b4" /></ScrollButton>
                </HScroll>
              </PaneColumn>
              <VScroll>
                <ScrollButton $live aria-label="Scroll up"><Chevron dir="up" /></ScrollButton>
                <VTrack>
                  <VThumb><svg width="7" height="8"><path d="M0 1h7M0 3h7M0 5h7M0 7h7" stroke="#8fabe8" /></svg></VThumb>
                </VTrack>
                <ScrollButton $live aria-label="Scroll down"><Chevron /></ScrollButton>
              </VScroll>
            </Panes>
          </Board>
        </Main>
      </Body>
    </Window>
  );
}
